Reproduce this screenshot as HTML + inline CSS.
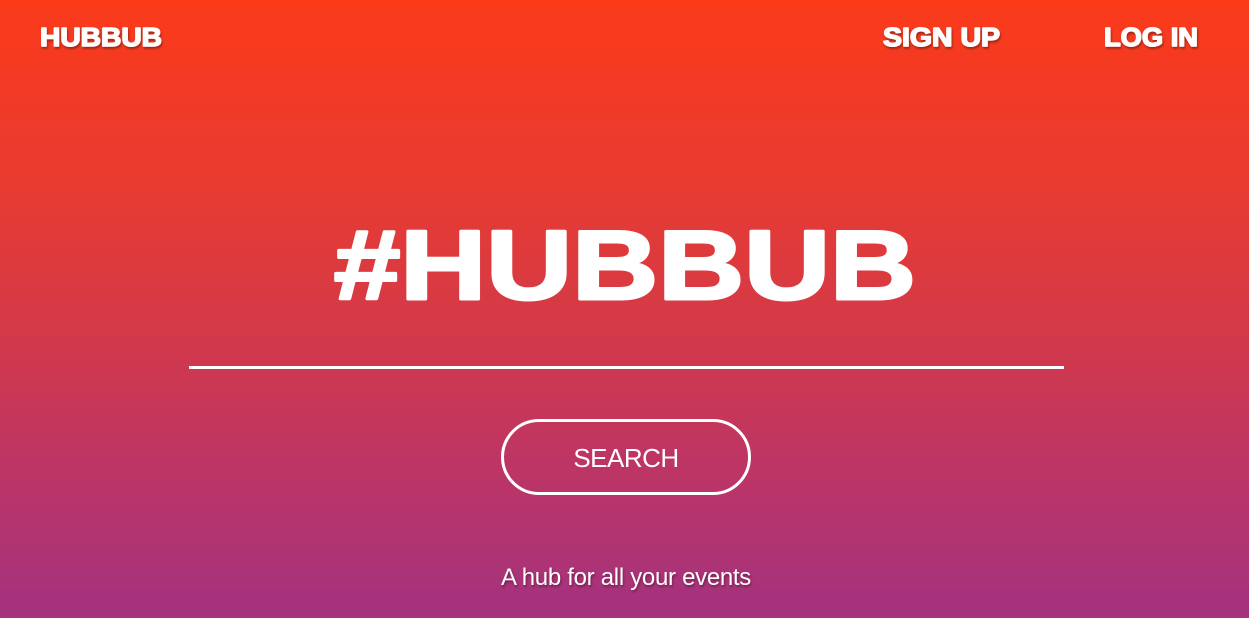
<!DOCTYPE html>
<html><head><style>
html,body{margin:0;padding:0;}
body{width:1249px;height:618px;overflow:hidden;position:relative;
background:linear-gradient(180deg,#fc3a1a 0%,#e83b31 30%,#d2394a 55%,#bd3564 75%,#a4327f 100%);
font-family:"Liberation Sans",sans-serif;color:#fff;}
svg{position:absolute;left:0;top:0;}
.line{position:absolute;left:189px;top:366px;width:875px;height:3px;background:#fff;}
.btn{position:absolute;left:501px;top:419px;width:244px;height:70px;border:3px solid #fff;border-radius:38px;box-sizing:content-box;}
.btn span{position:absolute;left:0;right:0;top:21px;text-align:center;font-size:26px;letter-spacing:-0.5px;}
.tag{position:absolute;left:0;width:1252px;top:564px;text-align:center;font-size:24px;letter-spacing:-0.3px;text-shadow:1px 2px 2px rgba(0,0,0,.35);}
</style></head><body>
<svg width="1249" height="618" xmlns="http://www.w3.org/2000/svg">
<defs><filter id="s"><feDropShadow dx="1" dy="2" stdDeviation="1" flood-color="#000" flood-opacity="0.35"/></filter></defs>
<g fill="#fff" stroke="#fff" stroke-linejoin="round" font-family="Liberation Sans, sans-serif" font-weight="bold" filter="url(#s)">
<text x="40" y="46" font-size="26" stroke-width="1.5" textLength="122" lengthAdjust="spacingAndGlyphs">HUBBUB</text>
<text x="883" y="46" font-size="26" stroke-width="1.5" textLength="117" lengthAdjust="spacingAndGlyphs">SIGN UP</text>
<text x="1104" y="46" font-size="26" stroke-width="1.5" textLength="94" lengthAdjust="spacingAndGlyphs">LOG IN</text>
</g>
<g fill="#fff" stroke="#fff" stroke-linejoin="round" font-family="Liberation Sans, sans-serif" font-weight="bold">
<text x="334" y="299" font-size="98" stroke-width="3" textLength="582" lengthAdjust="spacingAndGlyphs">#HUBBUB</text>
</g>
</svg>
<div class="line"></div>
<div class="btn"><span>SEARCH</span></div>
<div class="tag">A hub for all your events</div>
</body></html>
